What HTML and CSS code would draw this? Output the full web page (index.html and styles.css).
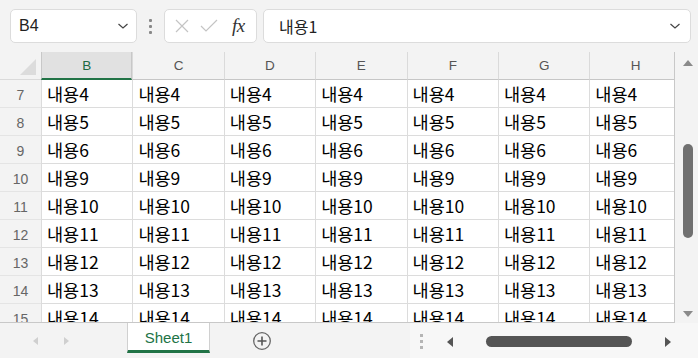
FILE: index.html
```html
<!DOCTYPE html>
<html lang="ko">
<head>
<meta charset="utf-8">
<link rel="stylesheet" href="styles.css">
</head>
<body>
<div class="app">
  <div class="fbar">
    <div class="namebox">
      <span class="nb-text">B4</span>
      <svg class="chev" width="12" height="8" viewBox="0 0 12 8"><path d="M1.5 2 L6 6 L10.5 2" fill="none" stroke="#444" stroke-width="1.2"/></svg>
    </div>
    <div class="vdots"><i></i><i></i><i></i></div>
    <div class="fxbox">
      <svg width="16" height="16" viewBox="0 0 16 16"><path d="M2 2 L14 14 M14 2 L2 14" stroke="#c4c4c4" stroke-width="1.2" fill="none"/></svg>
      <svg width="18" height="14" viewBox="0 0 18 14"><path d="M1 7 L6 12 L17 1" stroke="#c4c4c4" stroke-width="1.2" fill="none"/></svg>
      <span class="fx">fx</span>
    </div>
    <div class="formula">
      <span class="f-text">내용1</span>
      <svg class="chev" width="12" height="8" viewBox="0 0 12 8"><path d="M1.5 2 L6 6 L10.5 2" fill="none" stroke="#444" stroke-width="1.2"/></svg>
    </div>
  </div>
  <div class="main">
    <div class="sheet">
      <div class="grid">
        <div class="corner"><span class="tri"></span></div>
        <div class="ch sel">B</div><div class="ch">C</div><div class="ch">D</div><div class="ch">E</div><div class="ch">F</div><div class="ch">G</div><div class="ch">H</div>

        <div class="rh">7</div><div class="c">내용4</div><div class="c">내용4</div><div class="c">내용4</div><div class="c">내용4</div><div class="c">내용4</div><div class="c">내용4</div><div class="c">내용4</div>
        <div class="rh">8</div><div class="c">내용5</div><div class="c">내용5</div><div class="c">내용5</div><div class="c">내용5</div><div class="c">내용5</div><div class="c">내용5</div><div class="c">내용5</div>
        <div class="rh">9</div><div class="c">내용6</div><div class="c">내용6</div><div class="c">내용6</div><div class="c">내용6</div><div class="c">내용6</div><div class="c">내용6</div><div class="c">내용6</div>
        <div class="rh">10</div><div class="c">내용9</div><div class="c">내용9</div><div class="c">내용9</div><div class="c">내용9</div><div class="c">내용9</div><div class="c">내용9</div><div class="c">내용9</div>
        <div class="rh">11</div><div class="c">내용10</div><div class="c">내용10</div><div class="c">내용10</div><div class="c">내용10</div><div class="c">내용10</div><div class="c">내용10</div><div class="c">내용10</div>
        <div class="rh">12</div><div class="c">내용11</div><div class="c">내용11</div><div class="c">내용11</div><div class="c">내용11</div><div class="c">내용11</div><div class="c">내용11</div><div class="c">내용11</div>
        <div class="rh">13</div><div class="c">내용12</div><div class="c">내용12</div><div class="c">내용12</div><div class="c">내용12</div><div class="c">내용12</div><div class="c">내용12</div><div class="c">내용12</div>
        <div class="rh">14</div><div class="c">내용13</div><div class="c">내용13</div><div class="c">내용13</div><div class="c">내용13</div><div class="c">내용13</div><div class="c">내용13</div><div class="c">내용13</div>
        <div class="rh">15</div><div class="c">내용14</div><div class="c">내용14</div><div class="c">내용14</div><div class="c">내용14</div><div class="c">내용14</div><div class="c">내용14</div><div class="c">내용14</div>
      </div>
    </div>
    <div class="vscroll">
      <span class="arr up"></span>
      <div class="vtrack"><div class="vthumb"></div></div>
      <span class="arr down"></span>
    </div>
  </div>
  <div class="bottom">
    <div class="nav">
      <span class="narr left"></span>
      <span class="narr right"></span>
    </div>
    <div class="tab">Sheet1</div>
    <div class="add">
      <svg width="20" height="20" viewBox="0 0 20 20"><circle cx="10" cy="10" r="8.3" fill="none" stroke="#666" stroke-width="1.3"/><path d="M10 5.5 V14.5 M5.5 10 H14.5" stroke="#555" stroke-width="1.6"/></svg>
    </div>
    <div class="spacer"></div>
    <div class="hs">
      <div class="hdots"><i></i><i></i><i></i></div>
      <span class="harr hl"></span>
      <div class="htrack"><div class="hthumb"></div></div>
      <span class="harr hr"></span>
    </div>
  </div>
</div>
</body>
</html>
```

FILE: styles.css
```css
* { box-sizing: border-box; }
html, body { margin: 0; padding: 0; }
body {
  width: 698px;
  height: 358px;
  overflow: hidden;
  background: #f3f3f3;
  font-family: "Noto Sans CJK KR", "Noto Sans", sans-serif;
}
.app { display: flex; flex-direction: column; height: 358px; }

.fbar {
  height: 52px;
  display: flex;
  align-items: flex-start;
  padding: 9px 0 0 10px;
}
.namebox {
  width: 127px;
  height: 34px;
  background: #fff;
  border: 1px solid #dcdcdc;
  border-radius: 5px;
  display: flex;
  align-items: center;
  justify-content: space-between;
  padding: 0 7px 0 8px;
}
.nb-text { font-family: "Liberation Sans", Arial, sans-serif; font-size: 16px; color: #222; }
.vdots {
  width: 27px;
  height: 34px;
  display: flex;
  flex-direction: column;
  align-items: center;
  justify-content: center;
  gap: 3px;
}
.vdots i { display: block; width: 3px; height: 3px; background: #888; border-radius: 1px; }
.fxbox {
  width: 93px;
  height: 34px;
  background: #fff;
  border: 1px solid #dcdcdc;
  border-radius: 5px;
  display: flex;
  align-items: center;
  padding: 0 6px 0 9px;
  gap: 10px;
}
.fx {
  font-family: "Liberation Serif", "DejaVu Serif", serif;
  font-style: italic;
  font-size: 19px;
  color: #333;
  margin-left: 4px;
  letter-spacing: -0.5px;
}
.formula {
  margin-left: 6px;
  width: 428px;
  height: 34px;
  background: #fff;
  border: 1px solid #dcdcdc;
  border-radius: 5px;
  display: flex;
  align-items: center;
  justify-content: space-between;
  padding: 0 9px 0 15px;
}
.f-text { font-size: 16px; color: #222; }

.main { display: flex; height: 271px; }
.sheet {
  width: 675px;
  height: 271px;
  overflow: hidden;
  border-right: 1px solid #c8c8c8;
  border-bottom: 1px solid #c8c8c8;
}
.grid {
  display: grid;
  grid-template-columns: 41px repeat(7, 91.4px);
  grid-template-rows: 28px repeat(9, 28px);
  width: 681px;
}
.corner { position: relative; background: #f3f3f3; border-bottom: 1px solid #dadada; }
.tri {
  position: absolute;
  right: 5px;
  bottom: 4px;
  width: 0; height: 0;
  border-left: 16px solid transparent;
  border-bottom: 16px solid #dcdcdc;
}
.ch {
  background: #f3f3f3;
  border-left: 1px solid #dadada;
  border-bottom: 1px solid #c6c6c6;
  display: flex;
  align-items: center;
  justify-content: center;
  font-family: "Liberation Sans", Arial, sans-serif;
  font-size: 13.5px;
  color: #555;
}
.ch.sel {
  background: #e1e1e1;
  color: #1e6b43;
  border-bottom: 2px solid #217346;
  border-left: 1px solid #c8c8c8;
  border-right: 1px solid #c8c8c8;
}
.rh {
  background: #f3f3f3;
  border-bottom: 1px solid #e4e4e4;
  display: flex;
  align-items: center;
  justify-content: center;
  font-family: "Liberation Sans", Arial, sans-serif;
  font-size: 14px;
  color: #666;
  padding-top: 2px;
}
.c {
  background: #fff;
  border-left: 1px solid #dcdcdc;
  border-bottom: 1px solid #dcdcdc;
  display: flex;
  align-items: center;
  padding-left: 5px;
  font-size: 17.5px;
  color: #000;
  white-space: nowrap;
  overflow: hidden;
}

.vscroll {
  width: 23px;
  display: flex;
  flex-direction: column;
  align-items: center;
  padding: 8px 0 6px;
}
.arr { width: 0; height: 0; border-left: 5px solid transparent; border-right: 5px solid transparent; }
.arr.up { border-bottom: 6px solid #8a8a8a; margin-left: 2px; }
.arr.down { border-top: 6px solid #8a8a8a; margin-left: 2px; }
.vtrack { flex: 1; width: 10px; margin-left: 2px; padding-top: 78px; }
.vthumb { width: 10px; height: 94px; background: #707070; border-radius: 5px; }

.bottom { flex: 1; display: flex; align-items: stretch; }
.nav { width: 127px; display: flex; align-items: center; padding-left: 33px; gap: 26px; }
.narr { width: 0; height: 0; border-top: 4px solid transparent; border-bottom: 4px solid transparent; }
.narr.left { border-right: 5px solid #cfcfcf; }
.narr.right { border-left: 5px solid #cfcfcf; }
.tab {
  width: 83px;
  background: #fff;
  border-left: 1px solid #d0d0d0;
  border-right: 1px solid #d0d0d0;
  border-bottom: 3px solid #217346;
  margin-bottom: 5px;
  display: flex;
  align-items: center;
  justify-content: center;
  font-family: "Liberation Sans", Arial, sans-serif;
  font-size: 15px;
  color: #217346;
  padding-top: 2px;
}
.add { width: 104px; display: flex; align-items: center; justify-content: center; padding-top: 1px; }
.spacer { width: 96px; }
.hs {
  flex: 1;
  display: flex;
  align-items: center;
  background: #f7f7f7;
  padding-left: 10px;
  padding-top: 2px;
}
.hdots { display: flex; flex-direction: column; gap: 3px; margin-right: 24px; }
.hdots i { display: block; width: 3px; height: 3px; background: #b5b5b5; }
.harr { width: 0; height: 0; border-top: 5px solid transparent; border-bottom: 5px solid transparent; }
.harr.hl { border-right: 6px solid #555; }
.harr.hr { border-left: 6px solid #555; }
.htrack { width: 212px; padding-left: 33px; }
.hthumb { width: 146px; height: 11px; background: #555; border-radius: 6px; }
```
